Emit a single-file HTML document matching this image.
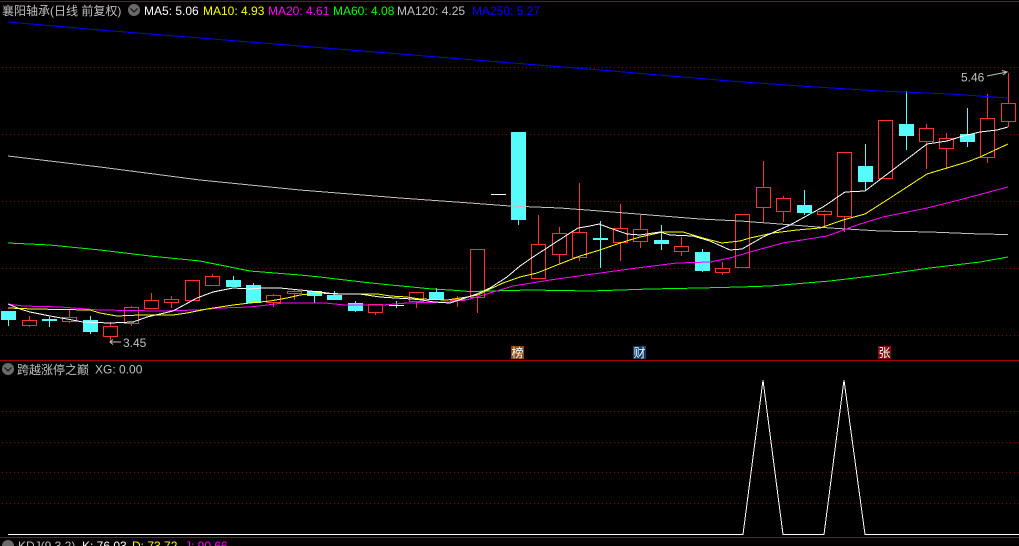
<!DOCTYPE html>
<html lang="zh">
<head>
<meta charset="utf-8">
<title>襄阳轴承</title>
<style>
html,body{margin:0;padding:0;background:#000;width:1019px;height:546px;overflow:hidden}
svg{display:block}
text{font-family:"Liberation Sans","WenQuanYi Zen Hei","Noto Sans CJK SC",sans-serif;font-size:12px}
.cn{font-family:"Liberation Sans","WenQuanYi Zen Hei","Noto Sans CJK SC",sans-serif;font-size:12px}
</style>
</head>
<body>
<svg width="1019" height="546" viewBox="0 0 1019 546" xmlns="http://www.w3.org/2000/svg">
<defs>
<pattern id="dots" x="2" y="0" width="4" height="1" patternUnits="userSpaceOnUse"><rect x="0" y="0" width="1" height="1" fill="#800000"/></pattern>
</defs>
<rect width="1019" height="546" fill="#000"/>
<g shape-rendering="crispEdges">
<path d="M0 1.5H1019M0 360.5H1019M0 537.5H1019" stroke="#a80000" stroke-width="1" fill="none"/>
<path d="M2 67h1017v1H2zM2 134h1017v1H2zM2 201h1017v1H2zM2 268h1017v1H2zM2 335h1017v1H2zM2 411h1017v1H2zM2 442h1017v1H2zM2 472h1017v1H2zM2 503h1017v1H2z" fill="url(#dots)"/>

<path d="M29.5 316V327M69.5 310V323M110.5 322V342M131.5 306V326M151.5 293V309M171.5 296V308M212.5 274V276M273.5 294V307M294.5 290V300M375.5 304V315M416.5 292V308M457.5 296V307M477.5 249V313M538.5 215V278M559.5 227V264M579.5 183V261M620.5 204V261M640.5 215V248M681.5 237V256M722.5 262V275M763.5 161V222M783.5 196V222M824.5 210V227M844.5 152V232M885.5 120V179M926.5 124V169M946.5 133V169M987.5 94V163M1008.5 73V127" stroke="#ff3232" fill="none"/>
<path d="M22.5 320.5h14v5h-14zM62.5 317.5h14v4h-14zM103.5 326.5h14v10h-14zM124.5 307.5h14v16h-14zM144.5 300.5h14v8h-14zM164.5 299.5h14v3h-14zM185.5 280.5h14v20h-14zM205.5 276.5h14v9h-14zM266.5 295.5h14v7h-14zM287.5 291.5h14v2h-14zM368.5 304.5h14v8h-14zM409.5 292.5h14v9h-14zM450.5 299.5h14v1h-14zM470.5 249.5h14v48h-14zM531.5 244.5h14v34h-14zM552.5 233.5h14v21h-14zM572.5 232.5h14v25h-14zM613.5 228.5h14v14h-14zM633.5 229.5h14v12h-14zM674.5 246.5h14v5h-14zM715.5 268.5h14v4h-14zM735.5 214.5h14v53h-14zM756.5 187.5h14v20h-14zM776.5 198.5h14v13h-14zM817.5 211.5h14v3h-14zM837.5 152.5h14v64h-14zM878.5 120.5h14v58h-14zM919.5 128.5h14v13h-14zM939.5 138.5h14v10h-14zM980.5 118.5h14v39h-14zM1001.5 103.5h14v18h-14z" stroke="#ff3232" fill="#000"/>

<path d="M8.5 311V326M49.5 317V327M90.5 316V334M233.5 276V287M253.5 283V303M314.5 291V303M334.5 291V300M355.5 301V312M396.5 301V308M436.5 288V300M518.5 132V225M600.5 221V268M661.5 225V250M702.5 249V272M804.5 190V215M865.5 144V190M906.5 91V150M967.5 108V147" stroke="#54fcfc" fill="none"/>
<path d="M1 311h15v9H1zM42 319h15v2H42zM83 320h15v12H83zM226 280h15v7h-15zM246 285h15v18h-15zM307 291h15v5h-15zM327 295h15v5h-15zM348 303h15v8h-15zM429 292h15v8h-15zM511 132h15v88h-15zM593 238h15v2h-15zM654 240h15v4h-15zM695 252h15v19h-15zM797 205h15v8h-15zM858 166h15v16h-15zM899 124h15v12h-15zM960 134h15v8h-15z" fill="#54fcfc"/>
<path d="M389 305h15v1h-15zM491 194h15v1h-15z" fill="#fff"/>

<polyline fill="none" stroke="#0000ff" points="8,22 100,30 200,38 300,46 400,54 500,62 600,70 730,81 800,86 880,91 950,94 1008,98"/>
<polyline fill="none" stroke="#c0c0c0" points="8,156 100,167 200,180 300,190 400,198 470,203 510,206 560,208 600,211 650,215 700,219 740,221 780,224 830,228 880,231 930,232 980,234 1008,234.5"/>
<polyline fill="none" stroke="#00ff00" points="8,243 50,245 100,250 150,256 200,261 250,271 300,275 320,277 345,280 371,283 391,285 412,287 432,289 450,290 470,291.5 530,290 590,291 650,289 700,288 740,287 770,286 830,281 880,275 930,268 980,262 1008,257"/>
<polyline fill="none" stroke="#ff00ff" points="8,304 23,306 60,307 100,310 160,311 197,310 220,308 250,307 267,305 283,303 325,303 345,305 383,305 407,303 447,302 465,300 470,299 490,293 513,286 550,280 593,274 637,268 677,263 710,262 730,258 750,252 783,243 827,236 860,224 883,217 927,208 963,199 1008,187"/>
<polyline fill="none" stroke="#ffff00" points="8,308 33,309 90,310 100,313 117,316 140,315 173,315 187,313 207,309 233,305 250,303 260,302 270,301 287,298 300,295 317,293 345,294 378,294 390,296 407,297 420,299 447,300 467,297 478,295 490,289 503,283 520,277 537,273 557,265 580,256 600,250 620,243 640,237 663,232 683,232 703,238 722,243 740,241 750,238 773,233 797,230 820,228 843,220 865,214 887,200 910,185 927,174 947,168 967,162 980,157 1008,144"/>
<polyline fill="none" stroke="#ffffff" points="8,304 20,309 30,312 50,316 67,319 83,322 110,323 133,322 147,317 173,311 197,298 213,292 233,288 250,289 263,288 280,288 300,290 320,292 335,294 345,294 360,294 380,297 395,298 412,299 422,300 434,302 450,303 477,294 490,288 507,277 520,266 533,257 550,246 567,235 578,228 590,226 599,224 607,227 627,234 640,235 660,232 670,235 693,236 710,241 730,250 742,249 763,237 790,225 823,207 845,192 865,191 890,172 927,144 947,141 963,136 980,132 997,130 1008,127"/>

<polyline fill="none" stroke="#fff" stroke-width="1" points="8,534.5 743,534.5 763,380 783,534.5 824,534.5 844,380 865,534.5 1019,534.5"/>
</g>

<rect x="511" y="346" width="13" height="13" fill="#8a4a10"/>
<rect x="633" y="346" width="13" height="13" fill="#0c3c6c"/>
<rect x="878" y="346" width="13" height="13" fill="#7c0c0c"/>
<text class="cn" x="511.500" y="357" fill="#fff">榜</text>
<text class="cn" x="633.500" y="357" fill="#fff">财</text>
<text class="cn" x="878.500" y="357" fill="#fff">张</text>

<text x="123" y="347" fill="#c0c0c0">3.45</text>
<path d="M121 342H110M113 339.5L110 342L113 344.5" fill="none" stroke="#c0c0c0"/>
<text x="961" y="81.5" fill="#c0c0c0">5.46</text>
<path d="M987 76L1007 72M1002 70.5L1007 72L1003 75" fill="none" stroke="#c0c0c0"/>

<text class="cn" x="2" y="15" fill="#c0c0c0">襄阳轴承(日线 前复权)</text>
<circle cx="134" cy="10" r="6" fill="#6a6a6a"/>
<path d="M130.5 8.5L134 12L137.5 8.5" fill="none" stroke="#1c1c1c" stroke-width="1.3"/>
<text x="144" y="15" fill="#fff">MA5: 5.06</text>
<text x="203" y="15" fill="#ffff00">MA10: 4.93</text>
<text x="268" y="15" fill="#ff00ff">MA20: 4.61</text>
<text x="333" y="15" fill="#00ff00">MA60: 4.08</text>
<text x="397" y="15" fill="#c0c0c0">MA120: 4.25</text>
<text x="472" y="15" fill="#0000ff">MA250: 5.27</text>

<circle cx="8" cy="369" r="6" fill="#6a6a6a"/>
<path d="M4.5 367.5L8 371L11.500 367.5" fill="none" stroke="#1c1c1c" stroke-width="1.3"/>
<text class="cn" x="17" y="374" fill="#c0c0c0">跨越涨停之巅</text>
<text x="95" y="373.500" fill="#c0c0c0">XG: 0.00</text>

<circle cx="8" cy="546" r="6" fill="#6a6a6a"/>
<text x="18" y="550" fill="#c0c0c0">KDJ(9,3,2)</text>
<text x="82" y="550" fill="#fff">K: 76.03</text>
<text x="132" y="550" fill="#ffff00">D: 73.72</text>
<text x="185" y="550" fill="#ff00ff">J: 90.66</text>
</svg>
</body>
</html>
